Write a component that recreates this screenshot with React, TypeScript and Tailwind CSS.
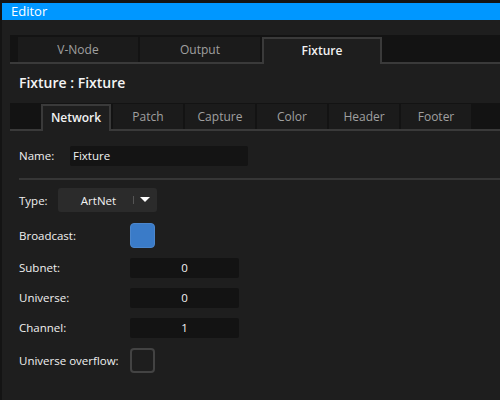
import React from "react";

const font = { fontFamily: '"Open Sans", "Noto Sans", sans-serif' };

const mainTabs = ["V-Node", "Output", "Fixture"];
const subTabs = ["Network", "Patch", "Capture", "Color", "Header", "Footer"];

const Tab = ({ label, active, w }: { label: string; active?: boolean; w: string }) =>
  active ? (
    <div
      className={`${w} h-[27px] -mb-[2px] flex items-center justify-center pb-[1px] bg-[#1e1e1e] border-2 border-b-0 border-[#3a3a3a] text-[12px] font-semibold text-[#f2f2f2]`}
    >
      {label}
    </div>
  ) : (
    <div
      className={`${w} h-[25px] flex items-center justify-center pt-[1px] bg-[#1b1b1b] text-[12px] text-[#a0a0a0]`}
    >
      {label}
    </div>
  );

const NumberField = ({ value }: { value: string }) => (
  <div className="w-[109px] h-[20px] rounded-[2px] bg-[#131313] flex items-center justify-center text-[11.5px] text-[#f2f2f2]">
    {value}
  </div>
);

const Row = ({ label, children, mt }: { label: string; children: React.ReactNode; mt: string }) => (
  <div className={`flex items-center ${mt}`}>
    <div className="w-[111px] text-[11.5px] text-[#f0f0f0]">{label}</div>
    {children}
  </div>
);

export default function App() {
  return (
    <div className="w-[500px] h-[400px] bg-[#141414] pt-[3px] pl-[2px] overflow-hidden" style={font}>
      <div className="h-[17px] bg-[#0097ff] flex items-center pl-[9px] text-[13px] text-white">Editor</div>
      <div className="h-[380px] bg-[#1e1e1e] pt-[15px]">
        {/* main tabs */}
        <div className="ml-[8px] h-[27px] bg-[#131313] border-b-2 border-[#3a3a3a] flex items-end gap-[2px] pl-[8px] box-content">
          {mainTabs.map((t) => (
            <Tab key={t} label={t} active={t === "Fixture"} w="w-[120px]" />
          ))}
        </div>

        <div className="h-[39px] flex items-center pb-[2px] pl-[17px] text-[14px] font-semibold text-[#f4f4f4]">
          Fixture : Fixture
        </div>

        {/* sub tabs */}
        <div className="ml-[8px] h-[26px] bg-[#131313] border-b-2 border-[#3a3a3a] flex items-end gap-[2px] pl-[31px] box-content">
          {subTabs.map((t) => (
            <Tab key={t} label={t} active={t === "Network"} w="w-[70px]" />
          ))}
        </div>

        <div className="pl-[17px]">
          <div className="flex items-center mt-[15px]">
            <div className="w-[51px] text-[11.5px] text-[#f0f0f0]">Name:</div>
            <div className="w-[178px] h-[20px] rounded-[2px] bg-[#141414] flex items-center pl-[3px] text-[11.5px] text-[#f2f2f2]">
              Fixture
            </div>
          </div>

          <div className="mt-[12px] h-[2px] bg-[#363636]" />

          <div className="flex items-center mt-[8px]">
            <div className="w-[39px] text-[11.5px] text-[#f0f0f0] pt-[1px]">Type:</div>
            <div className="w-[99px] h-[24px] rounded-[3px] bg-[#2b2b2b] flex items-center">
              <div className="flex-1 text-center text-[11.5px] text-[#f2f2f2] pl-[6px] pt-[1px]">ArtNet</div>
              <div className="w-px h-[8px] bg-[#555555]" />
              <svg width="22" height="10" viewBox="0 0 22 10" className="mr-[1px]">
                <path d="M6 2 L16 2 L11 7 Z" fill="#ffffff" />
              </svg>
            </div>
          </div>

          <Row label="Broadcast:" mt="mt-[11px]">
            <div className="w-[25px] h-[25px] rounded-[4px] bg-[#3a7bc8] border border-[#4b86cc]" />
          </Row>
          <Row label="Subnet:" mt="mt-[10px]">
            <NumberField value="0" />
          </Row>
          <Row label="Universe:" mt="mt-[10px]">
            <NumberField value="0" />
          </Row>
          <Row label="Channel:" mt="mt-[10px]">
            <NumberField value="1" />
          </Row>
          <Row label="Universe overflow:" mt="mt-[10px]">
            <div className="w-[25px] h-[25px] rounded-[4px] border-2 border-[#434343]" />
          </Row>
        </div>
      </div>
    </div>
  );
}
